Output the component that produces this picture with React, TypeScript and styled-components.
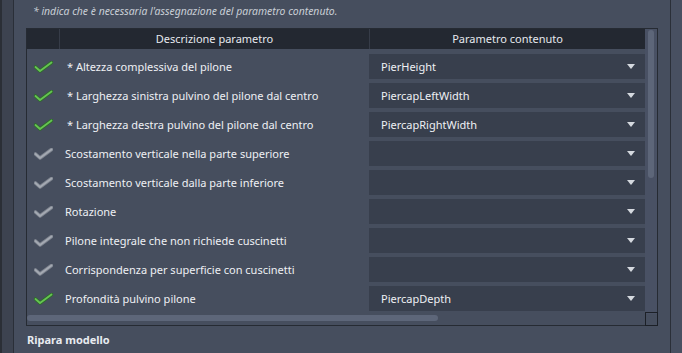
import React from "react";
import styled, { createGlobalStyle } from "styled-components";

const Global = createGlobalStyle`
  html, body { margin: 0; padding: 0; background: #464e5e; }
  body { width: 682px; height: 353px; overflow: hidden; font-family: "Noto Sans", "Open Sans", sans-serif; }
`;

const Frame = styled.div`
  display: flex;
  width: 682px;
  height: 353px;
`;

const LeftStrip = styled.div`
  width: 11px;
  background: #3d4350;
  border-left: 2px solid #2b2f36;
  border-right: 1px solid #2a2f38;
`;

const RightStrip = styled.div`
  width: 11px;
  background: #485061;
  border-left: 1px solid #2a2f38;
`;

const Panel = styled.div`
  flex: 1;
  display: flex;
  flex-direction: column;
  background: #464e5e;
  padding-left: 12px;
  padding-right: 12px;
`;

const Note = styled.div`
  height: 28px;
  line-height: 23px;
  padding-left: 7px;
  font-size: 10.4px;
  font-style: italic;
  color: #c9ced6;
`;

const Table = styled.div`
  position: relative;
  height: 296px;
  border: 1px solid #262b33;
  display: grid;
  grid-template-columns: 1fr 12px;
  grid-template-rows: 1fr 11px;
`;

const Body = styled.div`
  display: flex;
  flex-direction: column;
  overflow: hidden;
`;

const Header = styled.div`
  display: grid;
  grid-template-columns: 32px 309px 1fr;
  gap: 1px;
  height: 20px;
  background: #363c48;
`;

const HeadCell = styled.div`
  background: #232831;
  color: #e6e9ee;
  font-size: 11px;
  line-height: 20px;
  text-align: center;
`;

const Rows = styled.div`
  display: flex;
  flex-direction: column;
  padding-top: 5px;
  gap: 4px;
`;

const Row = styled.div`
  display: grid;
  grid-template-columns: 32px 310px 1fr;
  height: 25px;
  align-items: center;
`;

const CheckCell = styled.div`
  display: flex;
  align-items: center;
  padding-left: 7px;
`;

const Desc = styled.div<{ $req?: boolean }>`
  font-size: 11px;
  color: #eef0f4;
  padding-left: ${(p) => (p.$req ? "8px" : "6px")};
  white-space: nowrap;
`;

const Select = styled.div`
  height: 25px;
  background: #383f4d;
  display: flex;
  align-items: center;
  justify-content: space-between;
  padding: 0 10px 0 12px;
  font-size: 11px;
  color: #eef0f4;
`;

const Arrow = styled.div`
  width: 0;
  height: 0;
  border-left: 4px solid transparent;
  border-right: 4px solid transparent;
  border-top: 5px solid #d5d9df;
`;

const VTrack = styled.div`
  background: #495164;
  padding: 1px 3px;
`;

const VThumb = styled.div`
  width: 6px;
  height: 148px;
  border-radius: 3px;
  background: #5d6679;
`;

const HTrack = styled.div`
  padding: 1px 0 4px 0;
`;

const HThumb = styled.div`
  width: 411px;
  height: 6px;
  border-radius: 3px;
  background: #5d6679;
`;

const Corner = styled.div`
  border: 1px solid #1c2027;
  margin: -2px -1px -1px 0;
`;

const Footer = styled.div`
  padding-top: 6px;
  font-size: 11px;
  font-weight: 700;
  color: #e8ebf0;
  padding-left: 1px;
`;

const Check = ({ ok }: { ok: boolean }) => (
  <svg width="19" height="12" viewBox="0 0 19 12">
    <polyline
      points="1.5,6 6,10 17.5,1.5"
      fill="none"
      stroke={ok ? "#2e6b2c" : "#7d838e"}
      strokeWidth="3.6"
      strokeLinecap="round"
      strokeLinejoin="round"
    />
    <polyline
      points="1.5,6 6,10 17.5,1.5"
      fill="none"
      stroke={ok ? "#66c452" : "#a4a9b2"}
      strokeWidth="1.8"
      strokeLinecap="round"
      strokeLinejoin="round"
    />
  </svg>
);

const data: { ok: boolean; req: boolean; label: string; value: string }[] = [
  { ok: true, req: true, label: "Altezza complessiva del pilone", value: "PierHeight" },
  { ok: true, req: true, label: "Larghezza sinistra pulvino del pilone dal centro", value: "PiercapLeftWidth" },
  { ok: true, req: true, label: "Larghezza destra pulvino del pilone dal centro", value: "PiercapRightWidth" },
  { ok: false, req: false, label: "Scostamento verticale nella parte superiore", value: "" },
  { ok: false, req: false, label: "Scostamento verticale dalla parte inferiore", value: "" },
  { ok: false, req: false, label: "Rotazione", value: "" },
  { ok: false, req: false, label: "Pilone integrale che non richiede cuscinetti", value: "" },
  { ok: false, req: false, label: "Corrispondenza per superficie con cuscinetti", value: "" },
  { ok: true, req: false, label: "Profondità pulvino pilone", value: "PiercapDepth" },
];

export default function App() {
  return (
    <>
      <Global />
      <Frame>
        <LeftStrip />
        <Panel>
          <Note>* indica che è necessaria l'assegnazione del parametro contenuto.</Note>
          <Table>
            <Body>
              <Header>
                <HeadCell />
                <HeadCell>Descrizione parametro</HeadCell>
                <HeadCell>Parametro contenuto</HeadCell>
              </Header>
              <Rows>
                {data.map((r) => (
                  <Row key={r.label}>
                    <CheckCell>
                      <Check ok={r.ok} />
                    </CheckCell>
                    <Desc $req={r.req}>{r.req ? "* " + r.label : r.label}</Desc>
                    <Select>
                      <span>{r.value}</span>
                      <Arrow />
                    </Select>
                  </Row>
                ))}
              </Rows>
            </Body>
            <VTrack>
              <VThumb />
            </VTrack>
            <HTrack>
              <HThumb />
            </HTrack>
            <Corner />
          </Table>
          <Footer>Ripara modello</Footer>
        </Panel>
        <RightStrip />
      </Frame>
    </>
  );
}
